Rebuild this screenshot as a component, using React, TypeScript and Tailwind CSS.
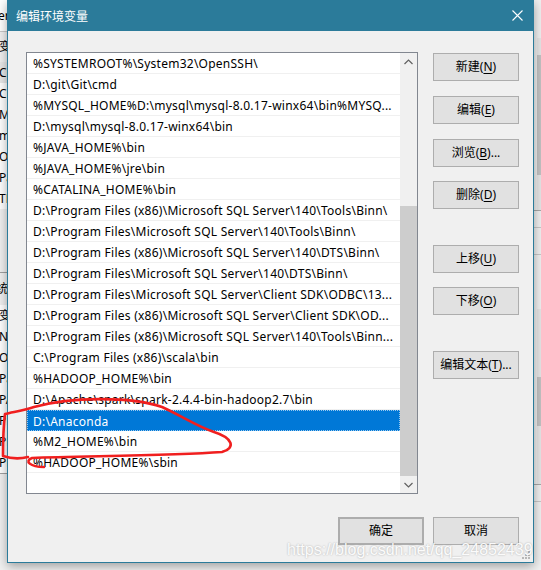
import React from "react";

const rows = [
  "%SYSTEMROOT%\\System32\\OpenSSH\\",
  "D:\\git\\Git\\cmd",
  "%MYSQL_HOME%D:\\mysql\\mysql-8.0.17-winx64\\bin%MYSQ...",
  "D:\\mysql\\mysql-8.0.17-winx64\\bin",
  "%JAVA_HOME%\\bin",
  "%JAVA_HOME%\\jre\\bin",
  "%CATALINA_HOME%\\bin",
  "D:\\Program Files (x86)\\Microsoft SQL Server\\140\\Tools\\Binn\\",
  "D:\\Program Files\\Microsoft SQL Server\\140\\Tools\\Binn\\",
  "D:\\Program Files (x86)\\Microsoft SQL Server\\140\\DTS\\Binn\\",
  "D:\\Program Files\\Microsoft SQL Server\\140\\DTS\\Binn\\",
  "D:\\Program Files\\Microsoft SQL Server\\Client SDK\\ODBC\\13...",
  "D:\\Program Files (x86)\\Microsoft SQL Server\\Client SDK\\OD...",
  "D:\\Program Files (x86)\\Microsoft SQL Server\\140\\Tools\\Binn...",
  "C:\\Program Files (x86)\\scala\\bin",
  "%HADOOP_HOME%\\bin",
  "D:\\Apache\\spark\\spark-2.4.4-bin-hadoop2.7\\bin",
  "D:\\Anaconda",
  "%M2_HOME%\\bin",
  "%HADOOP_HOME%\\sbin",
];

function Btn({ label, acc, tail, className = "" }: { label: string; acc?: string; tail?: string; className?: string }) {
  return (
    <div
      className={
        "h-[28px] w-[86px] flex items-center justify-center bg-[#e1e1e1] border border-[#adadad] text-[12px] text-black " +
        className
      }
    >
      <span>
        {label}
        {acc !== undefined && (
          <>
            (<span className="underline underline-offset-2">{acc}</span>){tail}
          </>
        )}
      </span>
    </div>
  );
}

function Chevron({ up }: { up?: boolean }) {
  return (
    <svg width="9" height="6" viewBox="0 0 9 6">
      {up ? (
        <polyline points="0.5,5 4.5,1 8.5,5" fill="none" stroke="#606060" strokeWidth="1.2" />
      ) : (
        <polyline points="0.5,1 4.5,5 8.5,1" fill="none" stroke="#606060" strokeWidth="1.2" />
      )}
    </svg>
  );
}

const leftTop = [
  { t: "Cl", bg: "bg-[#e8e8e8]" },
  { t: "Cl", bg: "bg-white" },
  { t: "M", bg: "bg-white" },
  { t: "m", bg: "bg-white" },
  { t: "O", bg: "bg-white" },
  { t: "Pa", bg: "bg-white" },
  { t: "TE", bg: "bg-white" },
];
const leftBottom = ["N", "O", "Pa", "PA", "PR", "PR", "PR"];

export default function App() {
  return (
    <div className="relative w-[541px] h-[570px] overflow-hidden bg-[#f0f0f0] font-['Noto_Sans','Noto_Sans_CJK_SC',sans-serif] text-[12px] text-black">
      {/* background window, left fragment */}
      <div className="absolute left-0 top-0 w-[8px] h-full overflow-hidden flex flex-col">
        <div className="h-[31px] bg-white flex items-center -ml-[2px] leading-none">er</div>
        <div className="h-px bg-[#c8c8c8]" />
        <div className="h-[30px] flex items-center -ml-[1px] leading-none">变</div>
        <div className="flex flex-col bg-white">
          {leftTop.map((r, i) => (
            <div key={i} className={"h-[21px] flex items-center -ml-[1px] leading-none " + r.bg}>
              {r.t}
            </div>
          ))}
        </div>
        <div className="h-[63px]" />
        <div className="h-px bg-[#a0a0a0]" />
        <div className="h-[32px] flex items-center -ml-[4px] leading-none">统</div>
        <div className="h-[21px] flex items-center -ml-[1px] leading-none bg-white">变</div>
        <div className="flex flex-col bg-white">
          {leftBottom.map((t, i) => (
            <div key={i} className="h-[21px] flex items-center -ml-[1px] leading-none">
              {t}
            </div>
          ))}
        </div>
        <div className="h-px bg-[#a0a0a0]" />
      </div>

      {/* background window, right fragment */}
      <div className="absolute right-0 top-0 w-[8px] h-full flex flex-col items-end">
        <div className="h-[38px]" />
        <div className="w-[4px] h-[172px] bg-[#e6e6e6] flex flex-col">
          <div className="h-[17px]" />
          <div className="h-[120px] bg-[#c2c2c2]" />
        </div>
        <div className="w-full h-px bg-[#a8a8a8]" />
        <div className="h-[16px]" />
        <div className="w-full h-px bg-[#c8c8c8]" />
        <div className="h-[26px]" />
        <div className="w-full h-px bg-[#c8c8c8]" />
        <div className="h-[54px]" />
        <div className="w-[4px] h-[175px] bg-[#e6e6e6] flex flex-col">
          <div className="h-[68px]" />
          <div className="h-[49px] bg-[#c2c2c2]" />
        </div>
        <div className="w-full h-px bg-[#a8a8a8]" />
        <div className="h-[16px]" />
        <div className="w-full h-px bg-[#c8c8c8]" />
      </div>

      {/* dialog */}
      <div className="absolute left-[7px] top-0 w-[527px] h-[563px] flex flex-col bg-[#f0f0f0] border border-t-0 border-[#2b7b9a] shadow-[0_3px_10px_rgba(0,0,0,0.35)]">
        <div className="h-[31px] shrink-0 bg-[#2b7b9a] flex items-center justify-between pl-[8px] pr-[10px] text-white text-[12px] font-['Noto_Sans_CJK_SC',sans-serif]">
          <span>编辑环境变量</span>
          <svg width="11" height="11" viewBox="0 0 11 11">
            <path d="M0.5 0.5 L10.5 10.5 M10.5 0.5 L0.5 10.5" stroke="white" strokeWidth="1.1" />
          </svg>
        </div>

        <div className="flex pl-[18px] pt-[21px] pr-[14px]">
          {/* list */}
          <div className="w-[392px] h-[442px] shrink-0 bg-white border border-[#828790] flex">
            <div className="flex-1 flex flex-col min-w-0">
              {rows.map((r, i) => {
                const sel = i === 17;
                return (
                  <div
                    key={i}
                    className={
                      "h-[21px] shrink-0 flex items-center pl-[6px] pt-[2px] whitespace-nowrap overflow-hidden tracking-[0.25px] " +
                      (sel
                        ? "bg-[#0078d7] text-white border border-dotted border-[#99c9ef]"
                        : "border-b border-[#f0f0f0]")
                    }
                  >
                    <span className={sel ? "-ml-px" : ""}>{r}</span>
                  </div>
                );
              })}
            </div>
            <div className="w-[17px] shrink-0 flex flex-col bg-[#f0f0f0]">
              <div className="h-[17px] flex items-center justify-center">
                <Chevron up />
              </div>
              <div className="h-[136px]" />
              <div className="flex-1 bg-[#cdcdcd]" />
              <div className="h-[17px] flex items-center justify-center">
                <Chevron />
              </div>
            </div>
          </div>

          {/* side buttons */}
          <div className="ml-[15px] pt-[1px] flex flex-col">
            <Btn label="新建" acc="N" />
            <Btn label="编辑" acc="E" className="mt-[15px]" />
            <Btn label="浏览" acc="B" tail="..." className="mt-[15px]" />
            <Btn label="删除" acc="D" className="mt-[14px]" />
            <Btn label="上移" acc="U" className="mt-[36px]" />
            <Btn label="下移" acc="O" className="mt-[14px]" />
            <Btn label="编辑文本" acc="T" tail="..." className="mt-[36px]" />
          </div>
        </div>

        <div className="flex justify-end gap-[9px] pr-[14px] mt-[23px]">
          <Btn label="确定" className="border-2 border-[#0078d7]" />
          <Btn label="取消" />
        </div>

        <div className="absolute right-[3px] bottom-[3px]">
          <svg width="8" height="8" viewBox="0 0 8 8">
            <rect x="6" y="0" width="2" height="2" fill="#b8b8b8" />
            <rect x="3" y="3" width="2" height="2" fill="#b8b8b8" />
            <rect x="6" y="3" width="2" height="2" fill="#b8b8b8" />
            <rect x="0" y="6" width="2" height="2" fill="#b8b8b8" />
            <rect x="3" y="6" width="2" height="2" fill="#b8b8b8" />
            <rect x="6" y="6" width="2" height="2" fill="#b8b8b8" />
          </svg>
        </div>
      </div>

      {/* watermark */}
      <div className="absolute left-[287px] top-[542px] text-[16px] leading-none font-['Liberation_Sans',sans-serif] text-[rgba(255,255,255,0.95)] [text-shadow:0_0_2px_rgba(0,0,0,0.3)] whitespace-nowrap">
        https://blog.csdn.net/qq_24852439
      </div>

      {/* red annotation */}
      <svg className="absolute inset-0 pointer-events-none" width="541" height="570" viewBox="0 0 541 570">
        <path
          d="M 44 467 C 30 467 24 461 32 458 C 80 456 170 456 222 452 C 236 448 233 438 214 432 C 196 426 182 416 162 407 C 130 396 70 397 34 407 C 22 411 12 412 5 414 C 3 430 3 445 3 456 C 12 459 20 459 28 457"
          fill="none"
          stroke="#f01f1f"
          strokeWidth="2.6"
          strokeLinecap="round"
          strokeLinejoin="round"
        />
      </svg>
    </div>
  );
}
